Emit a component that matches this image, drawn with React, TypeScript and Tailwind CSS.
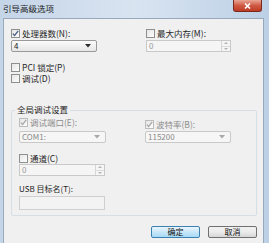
import React from 'react';

const font = { fontFamily: '"Noto Sans CJK SC", "Liberation Sans", sans-serif' };

const Check = ({ checked, disabled }: { checked?: boolean; disabled?: boolean }) => (
  <span
    className={`w-[9px] h-[9px] shrink-0 border flex items-center justify-center bg-gradient-to-br from-[#e6e6e6] to-[#fdfdfd] ${
      disabled ? 'border-[#bcbcbc]' : 'border-[#8e8f8f]'
    }`}
  >
    {checked && (
      <svg width="7" height="7" viewBox="0 0 7 7">
        <path
          d="M0.8 3.6 L2.6 5.5 L6.2 0.8"
          fill="none"
          stroke={disabled ? '#a9a9a9' : '#4d6185'}
          strokeWidth="1.3"
        />
      </svg>
    )}
  </span>
);

const CheckRow = ({
  label,
  checked,
  disabled,
  className = '',
}: {
  label: string;
  checked?: boolean;
  disabled?: boolean;
  className?: string;
}) => (
  <div className={`flex items-center gap-[2px] h-[10px] ${className}`}>
    <Check checked={checked} disabled={disabled} />
    <span className={`text-[8.5px] leading-[10px] ${disabled ? 'text-[#8d8d8d]' : 'text-[#1e1e1e]'}`}>{label}</span>
  </div>
);

const Select = ({ value, disabled, className = '' }: { value: string; disabled?: boolean; className?: string }) => (
  <div
    className={`h-[12px] flex items-center justify-between px-[2px] border rounded-[2px] ${
      disabled
        ? 'border-[#c8c8c8] bg-[#f6f6f6] text-[#8a8a8a]'
        : 'border-[#9a9a9a] bg-gradient-to-b from-[#fbfbfb] to-[#e6e6e6] text-[#222]'
    } ${className}`}
  >
    <span className="text-[8px] leading-none">{value}</span>
    <svg width="6" height="4" viewBox="0 0 6 4" className="mr-[3px]">
      <path d="M0 0 H6 L3 3.5 Z" fill={disabled ? '#a8a8a8' : '#2b2b2b'} />
    </svg>
  </div>
);

const Spin = ({ className = '' }: { className?: string }) => (
  <div className={`h-[12px] flex border border-[#c9c9c9] bg-[#f5f5f5] ${className}`}>
    <span className="flex-1 text-[8px] leading-[10px] pl-[2px] text-[#9a9a9a]">0</span>
    <div className="w-[9px] flex flex-col border-l border-[#d6d6d6]">
      <div className="flex-1 flex items-center justify-center border-b border-[#dcdcdc]">
        <svg width="4" height="2" viewBox="0 0 4 2">
          <path d="M0 2 L2 0 L4 2 Z" fill="#b2b2b2" />
        </svg>
      </div>
      <div className="flex-1 flex items-center justify-center">
        <svg width="4" height="2" viewBox="0 0 4 2">
          <path d="M0 0 L2 2 L4 0 Z" fill="#b2b2b2" />
        </svg>
      </div>
    </div>
  </div>
);

export default function App() {
  return (
    <div
      className="w-[269px] h-[243px] relative overflow-hidden bg-gradient-to-r from-[#c5d5e8] via-[#d9e4f1] to-[#bcd0e6] flex flex-col"
      style={font}
    >
      {/* title bar */}
      <div className="h-[18px] shrink-0 flex items-center pl-[3px]">
        <span className="text-[8.5px] leading-none text-[#1c1c1c] -mt-[1px]">引导高级选项</span>
      </div>
      <div className="absolute top-0 left-[233px] w-[29px] h-[12px] rounded-b-[3px] border border-t-0 border-[#7a2a1c] bg-gradient-to-b from-[#e9a595] via-[#cf5a44] to-[#bf3a25] flex items-center justify-center">
        <svg width="7" height="6" viewBox="0 0 7 6">
          <path d="M1 0.5 L6 5.5 M6 0.5 L1 5.5" stroke="#fff" strokeWidth="1.6" />
        </svg>
      </div>

      {/* client */}
      <div className="flex-1 ml-[3px] mr-[5px] bg-[#f0f0f0] border border-b-0 border-[#98a9bd] flex flex-col">
        <div className="flex pt-[9px]">
          <div className="w-[135px] pl-[7px] flex flex-col">
            <CheckRow label="处理器数(N):" checked />
            <Select value="4" className="mt-[2px] w-[86px]" />
            <CheckRow label="PCI 锁定(P)" className="mt-[10px]" />
            <CheckRow label="调试(D)" className="mt-[1px]" />
          </div>
          <div className="flex flex-col pl-[7px]">
            <CheckRow label="最大内存(M):" />
            <Spin className="mt-[2px] w-[85px]" />
          </div>
        </div>

        {/* group */}
        <div className="relative mt-[27px] ml-[7px] mr-[6px] h-[106px] border border-[#d5dfe5] rounded-[2px] flex">
          <span className="absolute -top-[6px] left-[3px] bg-[#f0f0f0] px-[2px] text-[8.5px] leading-none text-[#1e1e1e]">
            全局调试设置
          </span>
          <div className="w-[133px] pl-[7px] pt-[6px] flex flex-col">
            <CheckRow label="调试端口(E):" checked disabled />
            <Select value="COM1:" disabled className="mt-[4px] w-[87px]" />
            <CheckRow label="通道(C)" className="mt-[10px]" />
            <Spin className="mt-[1px] w-[86px]" />
            <span className="mt-[9px] text-[8px] leading-none text-[#1e1e1e]">USB 目标名(T):</span>
            <div className="mt-[3px] w-[86px] h-[14px] border border-[#cfcfcf] bg-[#f3f3f3]" />
          </div>
          <div className="flex flex-col pt-[8px]">
            <CheckRow label="波特率(B):" checked disabled />
            <Select value="115200" disabled className="mt-[2px] w-[86px]" />
          </div>
        </div>

        {/* buttons */}
        <div className="flex justify-end gap-[8px] mr-[6px] mt-[10px]">
          <button className="w-[49px] h-[12px] rounded-[2px] border border-[#3c7fb1] bg-gradient-to-b from-[#eaf6fd] via-[#c8e6f8] to-[#a7d9f5] text-[8px] leading-none text-[#111]">
            确定
          </button>
          <button className="w-[49px] h-[12px] rounded-[2px] border border-[#707070] bg-gradient-to-b from-[#f2f2f2] via-[#ebebeb] to-[#d6d6d6] text-[8px] leading-none text-[#111]">
            取消
          </button>
        </div>
      </div>
    </div>
  );
}
